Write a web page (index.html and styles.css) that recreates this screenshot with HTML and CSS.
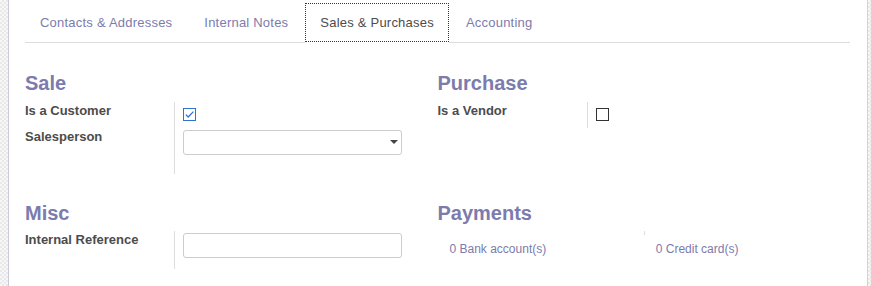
FILE: index.html
```html
<!DOCTYPE html>
<html lang="en">
<head>
<meta charset="utf-8">
<title>Sales &amp; Purchases</title>
<link rel="stylesheet" href="styles.css">
</head>
<body>
<div class="frame">
  <div class="edge edge-left"></div>
  <div class="sheet">
    <ul class="tabs">
      <li class="tab"><a class="tab-link">Contacts &amp; Addresses</a></li>
      <li class="tab"><a class="tab-link">Internal Notes</a></li>
      <li class="tab active"><a class="tab-link">Sales &amp; Purchases</a></li>
      <li class="tab"><a class="tab-link">Accounting</a></li>
    </ul>

    <div class="cols cols-top">
      <div class="col">
        <h3 class="sep-title">Sale</h3>
        <div class="group">
          <div class="lbl">Is a Customer</div>
          <div class="fld fld-cb">
            <span class="cb cb-checked">
              <svg viewBox="0 0 13 13" width="13" height="13"><path d="M2.8 6.6 L5.2 9 L10.4 3.6" fill="none" stroke="#2d73d2" stroke-width="1.3"/></svg>
            </span>
          </div>
          <div class="lbl">Salesperson</div>
          <div class="fld fld-last fld-tall">
            <div class="select"><span class="caret"></span></div>
          </div>
        </div>
      </div>
      <div class="col">
        <h3 class="sep-title">Purchase</h3>
        <div class="group">
          <div class="lbl">Is a Vendor</div>
          <div class="fld fld-cb"><span class="cb"></span></div>
        </div>
      </div>
    </div>

    <div class="cols cols-bottom">
      <div class="col">
        <h3 class="sep-title">Misc</h3>
        <div class="group">
          <div class="lbl">Internal Reference</div>
          <div class="fld fld-last fld-short">
            <div class="input"></div>
          </div>
        </div>
      </div>
      <div class="col">
        <h3 class="sep-title">Payments</h3>
        <div class="pay-row">
          <div class="pay-item"><div class="tick"></div><a class="pay-link">0 Bank account(s)</a></div>
          <div class="pay-item"><div class="tick tick-line"></div><a class="pay-link">0 Credit card(s)</a></div>
        </div>
      </div>
    </div>
  </div>
  <div class="edge edge-right"></div>
</div>
</body>
</html>
```
FILE: styles.css
```css
html, body {
  margin: 0;
  padding: 0;
  background: #fff;
}
body {
  font-family: "Liberation Sans", Arial, sans-serif;
  font-size: 13px;
  line-height: 1.42857;
  color: #4c4c4c;
}
.frame {
  display: flex;
  height: 286px;
  overflow: hidden;
}
.edge {
  flex: none;
  background-color: #f4f4f4;
  background-image: repeating-conic-gradient(#e9e9e9 0 25%, #f7f7f7 0 50%);
  background-size: 4px 4px;
}
.edge-left {
  width: 8px;
  border-right: 1px solid #c9c9dc;
}
.edge-right {
  width: 3px;
  border-left: 1px solid #d2d2d2;
}
.sheet {
  flex: 1;
  min-width: 0;
  padding: 0 17px 0 16px;
}

/* tabs */
.tabs {
  list-style: none;
  margin: 3px 0 0;
  padding: 0;
  display: flex;
  border-bottom: 1px solid #dddddd;
}
.tab {
  margin: 0 2px -1px 0;
  padding-bottom: 1px;
}
.tab.active {
  background: #fff;
}
.tab-link {
  display: block;
  padding: 10px 14px;
  line-height: 17px;
  border: 1px solid transparent;
  color: #7c7bad;
  white-space: nowrap;
  letter-spacing: 0.22px;
}
.tab.active .tab-link {
  border: 1px dotted #333;
  color: #4c4c4c;
}

/* columns */
.cols {
  display: grid;
  grid-template-columns: 1fr 1fr;
}
.cols-top { margin-top: 29px; }
.cols-bottom { margin-top: 28px; }
.sep-title {
  margin: 0 0 7.5px;
  font-size: 20px;
  line-height: 22px;
  font-weight: bold;
  color: #7c7bad;
}

/* field groups */
.group {
  display: grid;
  grid-template-columns: 150px 1fr;
}
.lbl {
  font-weight: bold;
  color: #4c4c4c;
  border-right: 1px solid #dddddd;
  padding-top: 0;
  white-space: nowrap;
}
.fld {
  padding: 0 36px 0 8px;
}
.fld-cb {
  height: 26px;
  box-sizing: border-box;
  padding-top: 6px;
}
.fld-tall { padding-bottom: 19px; }
.fld-short { padding-bottom: 11px; }
.cb {
  display: block;
  width: 13px;
  height: 13px;
  box-sizing: border-box;
  border: 1px solid #333;
  background: #fff;
  position: relative;
}
.cb-checked {
  border-color: #2d73d2;
}
.cb svg {
  position: absolute;
  left: -1px;
  top: -1px;
}
.select, .input {
  margin-top: 2px;
  height: 25px;
  box-sizing: border-box;
  border: 1px solid #cccccc;
  border-radius: 3px;
  background: #fff;
  position: relative;
}
.caret {
  position: absolute;
  right: 3px;
  top: 9px;
  width: 0;
  height: 0;
  border-left: 4px solid transparent;
  border-right: 4px solid transparent;
  border-top: 4px solid #444;
}

/* payments */
.pay-row {
  display: grid;
  grid-template-columns: 1fr 1fr;
}
.pay-item {
  padding-left: 12px;
}
.tick {
  height: 4px;
  margin-left: -12px;
}
.tick-line {
  border-left: 1px solid #dddddd;
}
.pay-link {
  display: block;
  margin-top: 5px;
  font-size: 12px;
  line-height: 18px;
  color: #7c7bad;
  white-space: nowrap;
}
```
